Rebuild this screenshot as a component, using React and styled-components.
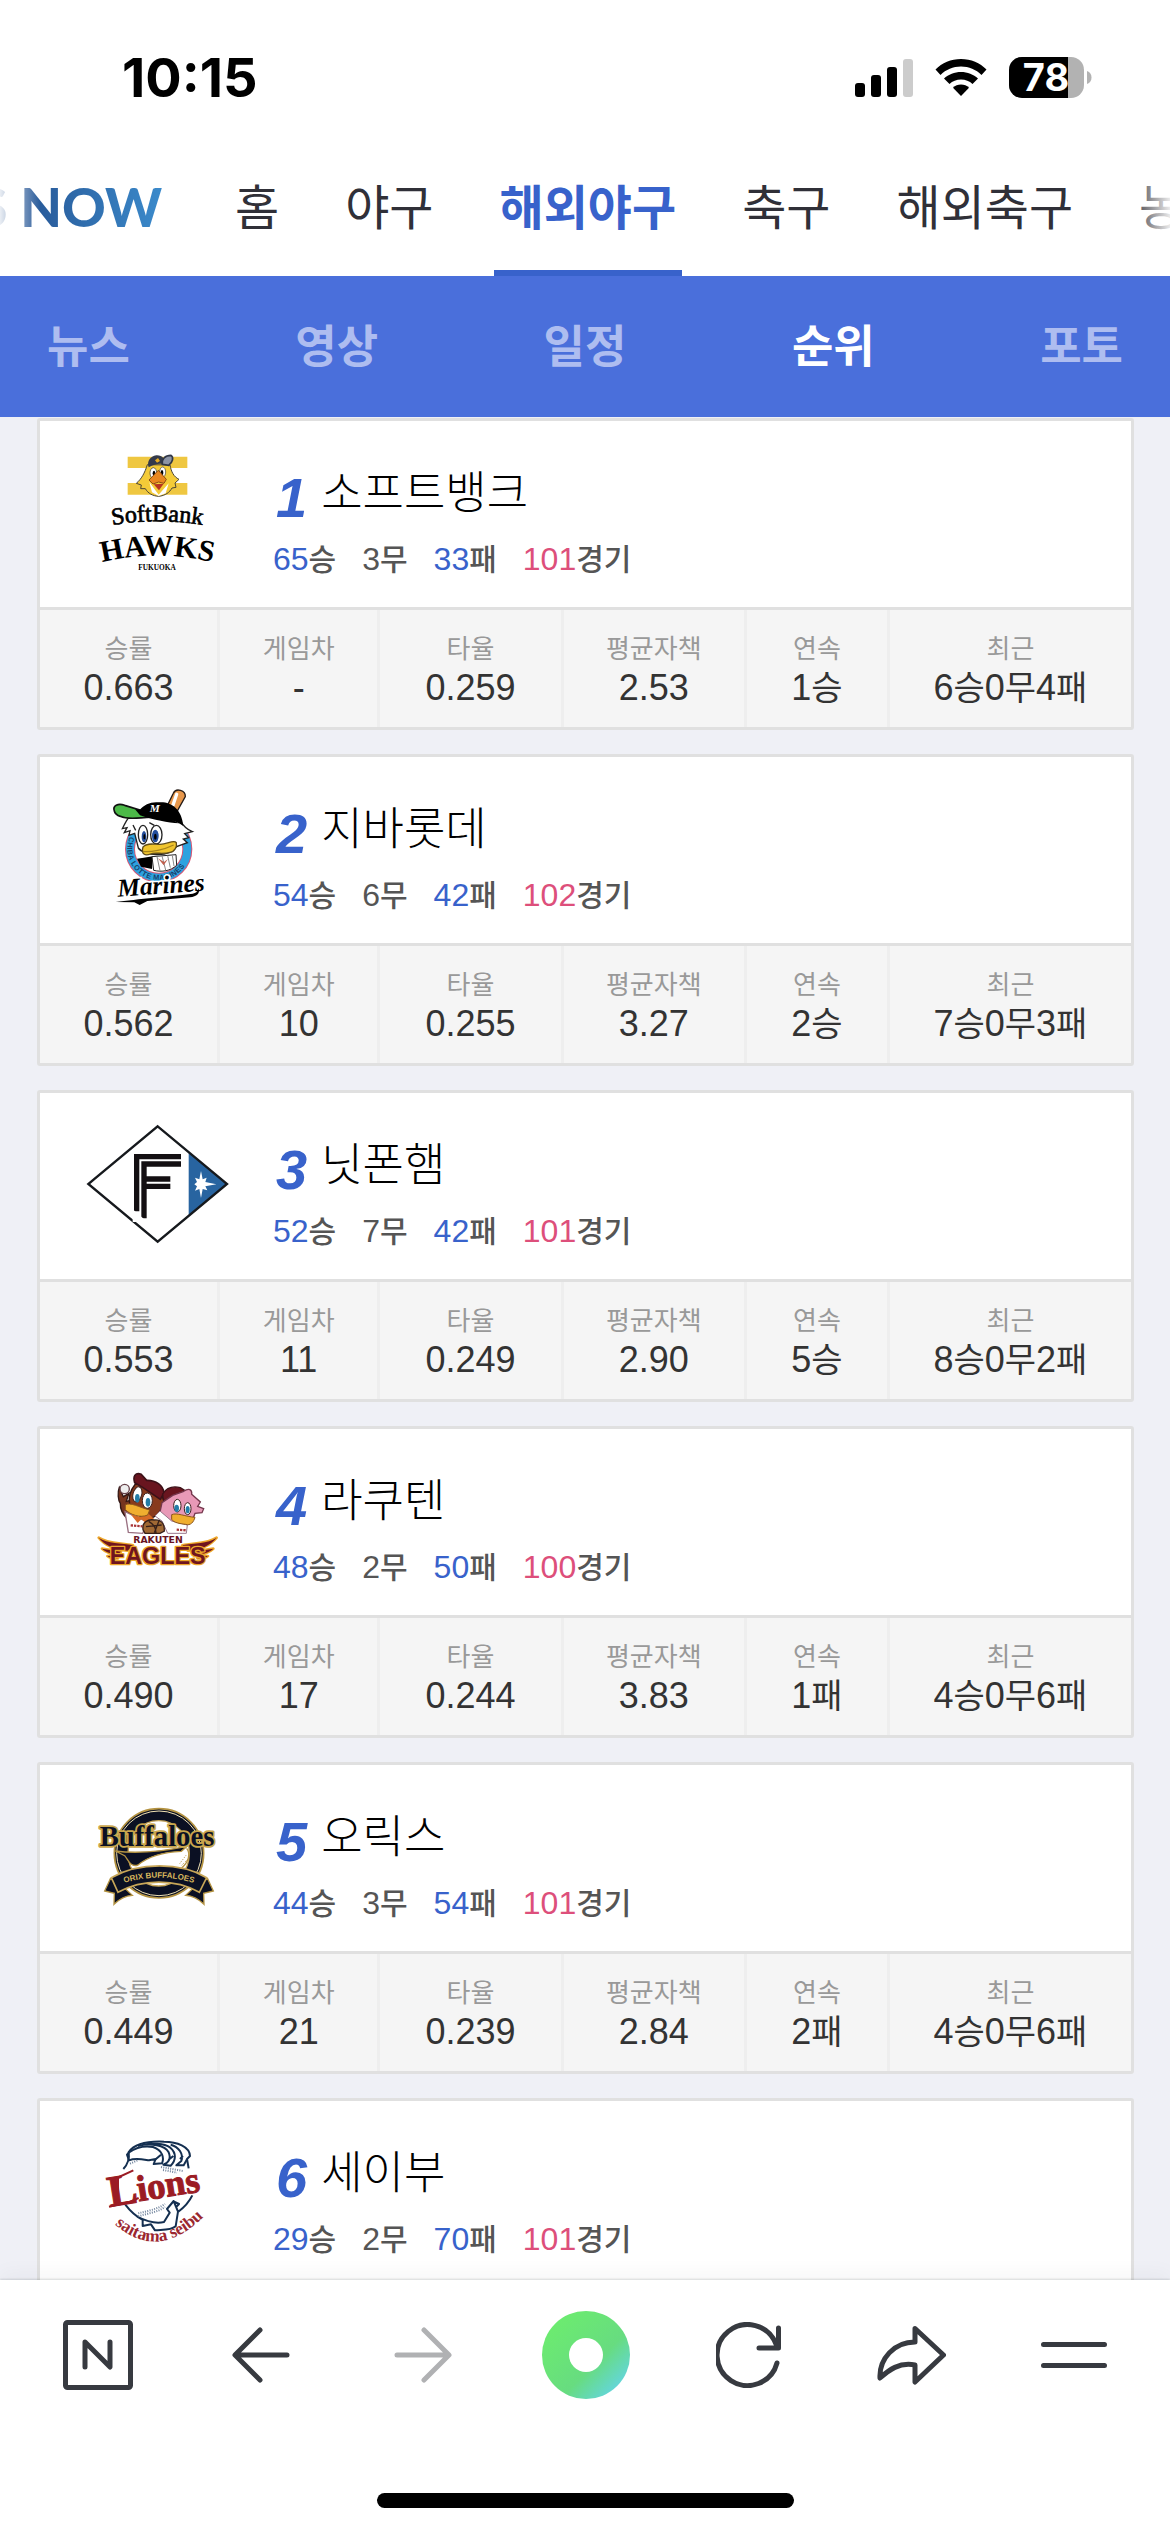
import styled, { createGlobalStyle } from "styled-components"


const teams = [
    { rank: 1, name: "소프트뱅크", win: 65, draw: 3, lose: 33, games: 101, rate: "0.663", behind: "-", avg: "0.259", era: "2.53", streak: "1승", recent: "6승0무4패" },
    { rank: 2, name: "지바롯데", win: 54, draw: 6, lose: 42, games: 102, rate: "0.562", behind: "10", avg: "0.255", era: "3.27", streak: "2승", recent: "7승0무3패" },
    { rank: 3, name: "닛폰햄", win: 52, draw: 7, lose: 42, games: 101, rate: "0.553", behind: "11", avg: "0.249", era: "2.90", streak: "5승", recent: "8승0무2패" },
    { rank: 4, name: "라쿠텐", win: 48, draw: 2, lose: 50, games: 100, rate: "0.490", behind: "17", avg: "0.244", era: "3.83", streak: "1패", recent: "4승0무6패" },
    { rank: 5, name: "오릭스", win: 44, draw: 3, lose: 54, games: 101, rate: "0.449", behind: "21", avg: "0.239", era: "2.84", streak: "2패", recent: "4승0무6패" },
    { rank: 6, name: "세이부", win: 29, draw: 2, lose: 70, games: 101, rate: "0.350", behind: "31", avg: "0.207", era: "3.20", streak: "1패", recent: "3승0무7패" },
]

const sports = ["홈", "야구", "해외야구", "축구", "해외축구", "농구"]
const menus = ["뉴스", "영상", "일정", "순위", "포토"]

export const App = () => {
    return (
        <SPage>
            <GlobalStyle />
            <StatusBar />
            <SSportsNav aria-label="종목">
                <SBrand href="#now"><span>SPORTS NOW</span></SBrand>
                {sports.map((name) => (
                    <SSportsLink href="#sports" key={name} $active={name === "해외야구"}>{name}</SSportsLink>
                ))}
            </SSportsNav>
            <SMenuNav aria-label="메뉴">
                {menus.map((name) => (
                    <SMenuLink href="#menu" key={name} $active={name === "순위"}>{name}</SMenuLink>
                ))}
            </SMenuNav>
            <SList>
                {teams.map((team) => <TeamCard key={team.rank} team={team} />)}
            </SList>
            <BottomBar />
        </SPage>
    )
}

export default App

const StatusBar = () => (
    <SStatus>
        <STime>10:15</STime>
        <SStatusIcons>
            <svg width="58" height="38" viewBox="0 0 58 38">
                <rect x="0" y="24" width="10" height="14" rx="3" />
                <rect x="16" y="16" width="10" height="22" rx="3" />
                <rect x="32" y="8" width="10" height="30" rx="3" />
                <rect x="48" y="0" width="10" height="38" rx="3" fill="#ccc" />
            </svg>
            <svg width="52" height="38" viewBox="0 0 52 38">
                <path d="M26 0C36 0 45 4 51.500 10.500L46.500 16C41 10.500 34 7.500 26 7.500S11 10.500 5.500 16L.5 10.500C7 4 16 0 26 0Z" />
                <path d="M26 13C32.500 13 38.500 15.500 43 19.500L37.500 25C34.500 22 30.500 20.500 26 20.500S17.500 22 14.500 25L9 19.500C13.500 15.500 19.500 13 26 13Z" />
                <path d="M26 25.500C29 25.500 32 26.700 34 28.700L26 37L18 28.700C20 26.700 23 25.500 26 25.500Z" />
            </svg>
            <svg width="83" height="42" viewBox="0 0 83 42">
                <clipPath id="cell"><rect width="75" height="41" rx="13" /></clipPath>
                <g clipPath="url(#cell)">
                    <rect width="75" height="41" fill="#b2b2b2" />
                    <rect width="59" height="41" />
                </g>
                <path d="M78 14C81 15 82.500 17.500 82.500 20.500S81 26 78 27Z" fill="#b2b2b2" />
                <text x="37" y="34" textAnchor="middle" fill="#fff" fontFamily="Inter, sans-serif" fontWeight="700" fontSize="38">78</text>
            </svg>
        </SStatusIcons>
    </SStatus>
)

// 숫자보다 한글 단위를 조금 작게 표시
const Value = ({ text }) => text.split(/([가-힣])/).filter(Boolean).map((part, i) => (
    /[가-힣]/.test(part) ? <SValueUnit key={i}>{part}</SValueUnit> : part
))

const TeamCard = ({ team }) => {
    const Logo = logos[team.rank - 1]
    return (
        <SCard>
            <SCardHead>
                <Logo />
                <div>
                    <STitle>
                        <SRank>{team.rank}</SRank>
                        <STeamName>{team.name}</STeamName>
                    </STitle>
                    <SRecord>
                        <li><SNum $color="#3862cb">{team.win}</SNum>승</li>
                        <li><SNum>{team.draw}</SNum>무</li>
                        <li><SNum $color="#3862cb">{team.lose}</SNum>패</li>
                        <li><SNum $color="#dd4f7b">{team.games}</SNum>경기</li>
                    </SRecord>
                </div>
            </SCardHead>
            <STable>
                <thead>
                    <tr>
                        <SHeadCell $width="16.5%">승률</SHeadCell>
                        <SHeadCell $width="14.7%">게임차</SHeadCell>
                        <SHeadCell $width="16.8%">타율</SHeadCell>
                        <SHeadCell $width="16.8%">평균자책</SHeadCell>
                        <SHeadCell $width="13.1%">연속</SHeadCell>
                        <SHeadCell $width="22.1%">최근</SHeadCell>
                    </tr>
                </thead>
                <tbody>
                    <tr>
                        <SCell>{team.rate}</SCell>
                        <SCell>{team.behind}</SCell>
                        <SCell>{team.avg}</SCell>
                        <SCell>{team.era}</SCell>
                        <SCell><Value text={team.streak} /></SCell>
                        <SCell><Value text={team.recent} /></SCell>
                    </tr>
                </tbody>
            </STable>
        </SCard>
    )
}

const BottomBar = () => (
    <SBottom>
        <STools>
            <STool aria-label="네이버 홈">
                <svg width="70" height="70" viewBox="0 0 70 70">
                    <rect x="2.500" y="2.500" width="65" height="65" rx="2" />
                    <path d="M22 47V22L47 47V22" />
                </svg>
            </STool>
            <STool aria-label="뒤로">
                <svg width="58" height="58" viewBox="0 0 58 58"><path d="M55 29H4M28 4L3 29L28 54" /></svg>
            </STool>
            <STool aria-label="앞으로" $off>
                <svg width="58" height="58" viewBox="0 0 58 58"><path d="M3 29H54M30 4L55 29L30 54" /></svg>
            </STool>
            <STool aria-label="그린닷"><SDot /></STool>
            <STool aria-label="새로고침">
                <svg width="66" height="66" viewBox="0 0 66 66"><path d="M61 41A30.500 30.500 0 1 1 60 22M62.500 6V26H43" /></svg>
            </STool>
            <STool aria-label="공유">
                <svg width="70" height="60" viewBox="0 0 70 60"><path d="M39 3.500L67.500 30L39 57V40C23 37 13 45 4 53C3 34 18 17 39 17Z" /></svg>
            </STool>
            <STool aria-label="메뉴">
                <svg width="66" height="28" viewBox="0 0 66 28"><path d="M2.500 3.500H63.500M2.500 24.500H63.500" /></svg>
            </STool>
        </STools>
        <SHomeIndicator />
    </SBottom>
)

/* ---- 팀 로고 ---- */

const HawksLogo = () => (
    <SLogo viewBox="0 0 600 480" aria-label="SoftBank Hawks">
        <path d="M203 80H382V114H203ZM203 159H382V194H203Z" fill="#efc741" />
        <path d="M262 104C254 130 244 147 229 160L244 165L242 176L256 176C264 190 278 198 296 199C316 197 329 187 336 174L348 172L345 159L357 148C341 140 334 126 330 105Z" fill="#f4cb38" stroke="#4b4535" strokeWidth="3" />
        <path d="M266 112C260 95 270 79 289 76C307 75 316 86 314 104C301 99 284 102 266 112Z" fill="#343a4b" />
        <path d="M307 103C304 88 315 76 333 76C342 82 338 97 326 106Z" fill="#8c94a6" stroke="#303747" strokeWidth="5" />
        <path d="M285 91L294 84L300 93L291 98Z" fill="#e7ac23" />
        <ellipse cx="280" cy="129" rx="10" ry="16" fill="#fff" stroke="#333" strokeWidth="2" />
        <ellipse cx="308" cy="126" rx="9" ry="15" fill="#fff" stroke="#333" strokeWidth="2" />
        <ellipse cx="282" cy="130" rx="4" ry="8" /><ellipse cx="306" cy="128" rx="4" ry="8" />
        <path d="M268 156L296 194L326 160L317 190L296 198L276 187Z" fill="#fff" />
        <path d="M295 121L319 148L312 160L296 156L279 162L267 150Z" fill="#e98720" stroke="#8c4d16" strokeWidth="3" />
        <path d="M281 163L311 161L297 181Z" fill="#b63422" />
        <path id="hawksTop" d="M140 288Q292 260 444 288" fill="none" />
        <path id="hawksMid" d="M100 404Q292 350 484 404" fill="none" />
        <text fontFamily="Liberation Serif, serif" fontSize="72" stroke="#000" strokeWidth="2"><textPath href="#hawksTop" startOffset="50%" textAnchor="middle">SoftBank</textPath></text>
        <text fontFamily="Liberation Serif, serif" fontWeight="700" fontSize="90"><textPath href="#hawksMid" startOffset="50%" textAnchor="middle">HAWKS</textPath></text>
        <text x="291" y="419" textAnchor="middle" fontFamily="Liberation Serif, serif" fontWeight="700" fontSize="22">FUKUOKA</text>
    </SLogo>
)

const MarinesLogo = () => (
    <SLogo viewBox="0 -12 600 480" aria-label="Marines">
        <circle cx="296" cy="237" r="86" fill="#fff" stroke="#d85574" strokeWidth="30" />
        <circle cx="296" cy="237" r="86" fill="none" stroke="#2da2df" strokeWidth="24" />
        <path id="marineRing" d="M217 202A86 86 0 1 0 375 202" fill="none" />
        <text fontFamily="Liberation Sans, sans-serif" fontWeight="700" fontSize="22" fill="#17416c" dy="8"><textPath href="#marineRing">CHIBA LOTTE MARINES</textPath></text>
        <path d="M319 113L340 70C348 52 377 61 376 80L348 130Z" fill="#e7974b" stroke="#241b17" strokeWidth="4" />
        <path d="M350 73L338 108" stroke="#fff" strokeWidth="10" strokeLinecap="round" />
        <path d="M226 122C205 140 198 153 187 176L201 173L193 188L210 182L207 196L224 190L235 234C250 256 326 266 350 230L382 218L370 207L386 203L374 191L397 185C378 177 369 166 362 154L308 128Z" fill="#fff" stroke="#222" strokeWidth="4" />
        <path d="M239 120C253 103 274 94 297 97C332 94 365 115 370 168C344 149 308 145 270 136Z" />
        <path d="M163 123C157 107 174 99 194 106L259 126L286 142C247 139 212 153 181 139C171 136 165 132 163 123Z" fill="#4cb948" stroke="#111" strokeWidth="5" />
        <path d="M225 118L285 124L357 160C323 158 283 151 240 136Z" />
        <text x="284" y="125" textAnchor="middle" fill="#fff" fontFamily="Liberation Serif, serif" fontStyle="italic" fontWeight="700" fontSize="34">M</text>
        <ellipse cx="249" cy="194" rx="14" ry="28" fill="#fff" stroke="#222" strokeWidth="4" />
        <ellipse cx="289" cy="194" rx="17" ry="28" fill="#fff" stroke="#222" strokeWidth="4" />
        <ellipse cx="252" cy="200" rx="7" ry="17" fill="#244e9c" /><ellipse cx="286" cy="198" rx="10" ry="19" fill="#244e9c" />
        <ellipse cx="253" cy="200" rx="3" ry="8" /><ellipse cx="286" cy="200" rx="4" ry="9" />
        <path d="M268 158L283 166M219 165L227 181" stroke="#222" strokeWidth="4" />
        <path d="M231 266L251 263L278 259L276 297L243 290Z" />
        <path d="M276 260L348 254L350 286C331 303 306 307 281 301Z" fill="#fff" stroke="#222" strokeWidth="3" />
        <path d="M291 260L300 302M306 258L317 300M323 257L331 293M337 257L342 288" stroke="#888" strokeWidth="3" />
        <path d="M294 265L312 276L324 267L311 286Z" fill="#bf604f" />
        <path d="M249 231C261 217 282 223 300 223C322 223 341 208 349 218C352 230 343 246 330 247C310 254 286 246 271 252C256 258 242 253 249 231Z" fill="#f0c52e" stroke="#604d1b" strokeWidth="4" />
        <path d="M249 244C272 247 313 239 341 225" fill="none" stroke="#a7831a" strokeWidth="4" />
        <text x="174" y="380" fontFamily="Liberation Serif, serif" fontStyle="italic" fontWeight="700" fontSize="76" stroke="#fff" strokeWidth="10" paintOrder="stroke" transform="rotate(-4 174 380)">Marines</text>
        <path d="M167 396C229 387 338 379 398 371C411 368 414 363 416 354C421 371 410 379 390 382L262 393L239 405L223 397Z" />
    </SLogo>
)

const FightersLogo = () => (
    <SLogo viewBox="0 -24 600 480" aria-label="Fighters">
        <path d="M386 128L500 222L386 316Z" fill="#2864a0" />
        <path d="M293 49L501 222L293 395L85 222Z" fill="none" stroke="#16191d" strokeWidth="7" />
        <path d="M363 140H230V304M363 162H252V325M331 207H252M331 229H259" fill="none" stroke="#130f12" strokeWidth="16" />
        <path d="M218 298L262 336H218Z" fill="#fff" />
        <path d="M423 183L428 208L440 203L436 216L469 223L436 229L442 241L428 237L423 264L418 237L405 242L411 229L403 223L411 216L405 203L418 208Z" fill="#fff" />
    </SLogo>
)

const EaglesLogo = () => (
    <SLogo viewBox="0 -36 600 480" aria-label="Rakuten Eagles">
        <path d="M178 112C172 128 174 150 181 160C180 176 187 193 204 208L240 176L214 151L199 154L207 130L190 140Z" fill="#76351f" stroke="#321714" strokeWidth="4" />
        <circle cx="194" cy="117" r="14" fill="#eee" stroke="#67434b" strokeWidth="4" />
        <path d="M226 102C211 121 205 143 209 162L240 199L269 207L291 196L315 161L302 128L263 105Z" fill="#883a1d" stroke="#321714" strokeWidth="4" />
        <path d="M224 98C218 79 226 66 244 73L260 91C287 90 310 106 312 129L301 148L248 112Z" fill="#69151f" stroke="#3c1118" strokeWidth="5" />
        <path d="M308 132C318 116 337 107 361 113L379 124L334 146L312 157Z" fill="#69151f" stroke="#3c1118" strokeWidth="4" />
        <path d="M306 158L338 136L371 124C386 113 397 118 395 133L421 156L413 169L431 176L426 188L405 190L401 201L374 224L336 217L300 186Z" fill="#e899b7" stroke="#73364b" strokeWidth="4" />
        <path d="M300 183L285 198L306 213L323 250H379L382 225L335 213Z" fill="#fff" stroke="#9b788d" strokeWidth="3" />
        <path d="M195 185L205 247L248 250L263 216L219 196Z" fill="#fff" stroke="#9a7182" strokeWidth="4" />
        <path d="M213 194L242 200L263 189L282 206L257 219L244 208L233 219Z" fill="#d66a27" />
        <g fill="#fff" stroke="#3b211e" strokeWidth="3">
            <ellipse cx="232" cy="133" rx="13" ry="23" transform="rotate(15 232 133)" /><ellipse cx="262" cy="152" rx="15" ry="23" />
            <ellipse cx="352" cy="167" rx="11" ry="19" /><ellipse cx="383" cy="176" rx="10" ry="18" />
        </g>
        <g fill="#247da8">
            <ellipse cx="232" cy="145" rx="7" ry="13" /><ellipse cx="264" cy="157" rx="7" ry="13" />
            <ellipse cx="350" cy="175" rx="7" ry="11" /><ellipse cx="383" cy="179" rx="6" ry="11" />
        </g>
        <path d="M196 165C210 155 238 172 269 180L263 195C241 205 211 194 196 179Z" fill="#f0ae2f" stroke="#8c561c" strokeWidth="3" />
        <path d="M335 194C350 187 377 200 405 202C401 216 392 228 376 223C359 221 341 218 335 208Z" fill="#f0ae2f" stroke="#8c561c" strokeWidth="3" />
        <path d="M249 239C245 216 264 207 283 210C301 208 314 218 313 243L300 250H255Z" fill="#a06934" stroke="#362019" strokeWidth="4" />
        <path d="M266 214C281 223 288 231 288 250M258 230L305 225M297 212L283 248" fill="none" stroke="#362019" strokeWidth="4" />
        <path d="M212 226L247 229M350 239L379 241" stroke="#a93638" strokeWidth="7" strokeDasharray="7 3" />
        <text x="294" y="278" textAnchor="middle" fill="#69131f" fontFamily="DejaVu Sans, sans-serif" fontWeight="700" fontSize="28">RAKUTEN</text>
        <g stroke="#eea72a" strokeWidth="8" strokeLinejoin="round" paintOrder="stroke" fill="#70151e">
            <path d="M116 263C143 282 184 278 219 286L203 302C164 300 135 286 116 263ZM126 296L183 305L174 313C153 313 137 306 126 296ZM142 318L174 317L174 325C158 326 148 323 142 318Z" />
            <path d="M470 263C443 282 402 278 367 286L383 302C422 300 451 286 470 263ZM460 296L403 305L412 313C433 313 449 306 460 296ZM444 318L412 317L412 325C428 326 438 323 444 318Z" />
            <text x="293" y="341" textAnchor="middle" fontFamily="Liberation Sans, sans-serif" fontWeight="700" fontSize="70">EAGLES</text>
        </g>
    </SLogo>
)

const BuffaloesLogo = () => (
    <SLogo viewBox="0 -18 600 480" aria-label="Orix Buffaloes">
        <circle cx="297" cy="220" r="134" fill="#0b1023" stroke="#b49342" strokeWidth="5" />
        <circle cx="297" cy="220" r="127" fill="none" stroke="#f0e2b5" strokeWidth="3" />
        <ellipse cx="296" cy="220" rx="92" ry="98" fill="#fff" stroke="#c7a658" strokeWidth="4" />
        <path d="M166 213C225 221 308 214 381 199L364 214C312 216 269 226 234 255C211 263 205 240 194 227Z" fill="#0b1023" stroke="#b49342" strokeWidth="4" />
        <path d="M380 205C393 222 385 247 365 264" fill="none" stroke="#b49342" strokeWidth="4" />
        <path d="M378 226L359 251M382 239L363 258" stroke="#b49342" strokeWidth="3" strokeDasharray="3 4" />
        <path d="M151 296L134 333L163 340L162 373C177 358 196 347 217 346L181 312ZM443 296L460 333L431 340L432 373C417 358 398 347 377 346L413 312Z" fill="#0b1023" stroke="#b49342" strokeWidth="4" />
        <path d="M154 293C237 246 361 246 440 293L418 337C348 296 246 296 174 337Z" fill="#0b1023" stroke="#c7a658" strokeWidth="5" />
        <path id="orix" d="M176 314Q297 272 418 314" fill="none" />
        <text fill="#d8b75d" fontFamily="Liberation Sans, sans-serif" fontWeight="700" fontSize="24"><textPath href="#orix" startOffset="50%" textAnchor="middle">ORIX BUFFALOES</textPath></text>
        <text x="291" y="197" textAnchor="middle" fontFamily="Liberation Serif, serif" fontWeight="700" fontSize="86" fill="#0b1023" stroke="#c9a64d" strokeWidth="11" strokeLinejoin="round" paintOrder="stroke">Buffaloes</text>
    </SLogo>
)

const LionsLogo = () => (
    <SLogo viewBox="0 -30 600 480" aria-label="Saitama Seibu Lions">
        <g fill="none" stroke="#142f50" strokeWidth="6" strokeLinejoin="round">
            <path d="M190 147C204 132 209 116 206 96C225 70 268 63 312 65C351 65 389 80 390 108L381 117L386 145" />
            <path d="M207 97L201 104L207 121C226 113 247 118 267 121L287 117L281 132L306 130C313 113 308 91 279 81C254 77 228 82 207 97Z" />
            <path d="M234 78C272 68 315 76 326 97C334 116 326 128 310 134L332 137C348 122 350 99 331 83C312 70 277 68 247 75M332 74C357 80 371 103 364 123L349 136L371 136L381 118M287 118L303 104M325 120L340 108M360 117L369 108" />
            <path d="M196 254C214 278 230 290 248 300L248 318L273 313L285 331C309 329 333 332 347 319L354 275L341 243L321 267L329 278L312 306C287 312 255 302 231 290M397 226C387 247 374 261 354 276M341 244L357 252L347 263" />
        </g>
        <path d="M235 280C260 274 291 268 315 252M235 289C260 281 292 277 315 261M210 131L233 121M303 141L369 153M309 150L351 158" fill="none" stroke="#71849d" strokeWidth="6" strokeDasharray="3 4" />
        <g fontFamily="Liberation Serif, serif" fontWeight="700" fill="#9b1c24" stroke="#9b1c24" strokeWidth="3">
            <text x="150" y="260" fontSize="132" transform="rotate(-9 150 260)">L</text>
            <text x="236" y="244" fontSize="110" transform="rotate(-9 236 244)">ions</text>
        </g>
        <path d="M164 177L220 151M174 174V246M147 260L205 247L236 234" fill="none" stroke="#9b1c24" strokeWidth="6" />
        <path id="saitama" d="M142 292Q292 448 452 268" fill="none" />
        <text fontFamily="Liberation Serif, serif" fontWeight="700" fontSize="52" fill="#9b2730"><textPath href="#saitama" startOffset="50%" textAnchor="middle">saitama seibu</textPath></text>
    </SLogo>
)

const logos = [HawksLogo, MarinesLogo, FightersLogo, EaglesLogo, BuffaloesLogo, LionsLogo]


const GlobalStyle = createGlobalStyle`
    * {
        box-sizing: border-box;
    }
    body {
        margin: 0;
        background: #fff;
        font-family: "Liberation Sans", "Noto Sans CJK KR", sans-serif;
    }
    a {
        color: inherit;
        text-decoration: none;
    }
`

const SPage = styled.div`
    display: flex;
    flex-direction: column;
    height: 100vh;
    overflow: hidden;
`

const SStatus = styled.div`
    display: flex;
    flex: none;
    justify-content: space-between;
    align-items: center;
    height: 138px;
    padding: 18px 78px 0 122px;
`

const STime = styled.span`
    font: 700 54px/60px Inter, sans-serif;
    color: #000;
`

const SStatusIcons = styled.div`
    display: flex;
    align-items: center;
    gap: 22px;
`

const SSportsNav = styled.nav`
    position: relative;
    display: flex;
    flex: none;
    gap: 54px;
    height: 138px;
    overflow: hidden;
    white-space: nowrap;
    /* 양쪽 끝 흐림 */
    &::before, &::after {
        content: "";
        position: absolute;
        top: 0;
        bottom: 0;
        left: 0;
        width: 40px;
        background: linear-gradient(to right, rgba(255, 255, 255, 0.9), transparent);
    }
    &::after {
        left: auto;
        right: 0;
        background: linear-gradient(to left, rgba(255, 255, 255, 0.9), transparent);
    }
`

const SBrand = styled.a`
    display: flex;
    flex: none;
    justify-content: flex-end;
    align-items: center;
    width: 175px;
    padding-right: 13px;
    span {
        font: 900 54px/64px Lato, sans-serif;
        color: transparent;
        background: linear-gradient(to right, #234d8c 55%, #3b8acb);
        background-clip: text;
    }
`

const SSportsLink = styled.a`
    flex: none;
    padding: 0 6px;
    font-family: "Noto Sans CJK KR", sans-serif;
    font-size: 48px;
    line-height: 132px;
    font-weight: ${({ $active }) => ($active ? 700 : 400)};
    color: ${({ $active }) => ($active ? "#3862cb" : "#303038")};
    box-shadow: ${({ $active }) => ($active ? "inset 0 -6px #3862cb" : "none")};
`

const SMenuNav = styled.nav`
    display: flex;
    flex: none;
    justify-content: space-between;
    padding: 0 47px 6px;
    background: #4a6fdb;
`

const SMenuLink = styled.a`
    font-family: "Noto Sans CJK KR", sans-serif;
    font-size: 45px;
    line-height: 135px;
    font-weight: 700;
    color: ${({ $active }) => ($active ? "#fff" : "#aebdf0")};
`

const SList = styled.main`
    display: flex;
    flex: 1;
    flex-direction: column;
    gap: 24px;
    min-height: 0;
    padding: 1px 36px 24px 37px;
    overflow-y: auto;
    scrollbar-width: none;
    background: #eff0f6;
`

const SCard = styled.article`
    flex: none;
    border: 3px solid #e0e0e0;
    border-radius: 3px;
    background: #fff;
`

const SCardHead = styled.div`
    display: flex;
    gap: 13px;
    height: 186px;
    padding: 9px 20px;
`

const SLogo = styled.svg`
    flex: none;
    width: 200px;
    height: 160px;
`

const STitle = styled.h2`
    display: flex;
    align-items: flex-end;
    gap: 14px;
    margin: 0;
    padding: 32px 0 0 3px;
    font-weight: 400;
`

const SRank = styled.em`
    font-size: 56px;
    line-height: 56px;
    font-weight: 700;
    color: #3862cb;
`

const STeamName = styled.span`
    padding-bottom: 8px;
    font-family: "Noto Sans CJK KR", sans-serif;
    font-size: 45px;
    line-height: 56px;
    font-weight: 300;
    color: #000;
`

const SRecord = styled.ul`
    display: flex;
    gap: 26px;
    margin: 0;
    padding: 9px 0 0;
    list-style: none;
    font-size: 30px;
    line-height: 48px;
    font-weight: 500;
    color: #555;
`

const SNum = styled.span`
    font-size: 32px;
    font-weight: 400;
    color: ${({ $color }) => $color || "#555"};
`

const STable = styled.table`
    width: 100%;
    table-layout: fixed;
    border-collapse: separate;
    border-spacing: 0;
    border-top: 3px solid #e0e0e0;
    background: #f5f5f5;
    text-align: center;
`

const SHeadCell = styled.th`
    width: ${({ $width }) => $width};
    height: 58px;
    padding: 20px 0 0;
    border-right: 3px solid #eeeeee;
    font-size: 26px;
    line-height: 38px;
    font-weight: 400;
    color: #999;
    &:last-child {
        border-right: 0;
    }
`

const SCell = styled.td`
    height: 59px;
    padding: 0 0 19px;
    border-right: 3px solid #eeeeee;
    font-size: 36px;
    line-height: 40px;
    color: #333;
    &:last-child {
        border-right: 0;
    }
`

const SValueUnit = styled.span`
    font-size: 34px;
`

const SBottom = styled.footer`
    position: relative;
    display: flex;
    flex: none;
    flex-direction: column;
    justify-content: space-between;
    align-items: center;
    height: 252px;
    padding-bottom: 24px;
    background: #fff;
    box-shadow: 0 -1px 2px rgba(0, 20, 20, 0.14), 0 -6px 20px rgba(0, 30, 40, 0.04);
`

const STools = styled.div`
    display: grid;
    grid-template-columns: repeat(7, 1fr);
    width: 100%;
    height: 150px;
    padding: 0 15px 0 17px;
`

const STool = styled.button`
    display: flex;
    justify-content: center;
    align-items: center;
    padding: 0;
    border: 0;
    background: none;
    svg {
        fill: none;
        stroke: ${({ $off }) => ($off ? "#b0b1b3" : "#373a40")};
        stroke-width: 5px;
        stroke-linecap: round;
        stroke-linejoin: round;
    }
`

const SDot = styled.span`
    width: 88px;
    height: 88px;
    border: 27px solid transparent;
    border-radius: 50%;
    background: linear-gradient(#fff, #fff) padding-box, linear-gradient(135deg, #6ceb70 15%, #67dc80 60%, #63d5e5 90%) border-box;
`

const SHomeIndicator = styled.div`
    width: 417px;
    height: 15px;
    border-radius: 8px;
    background: #000;
`
